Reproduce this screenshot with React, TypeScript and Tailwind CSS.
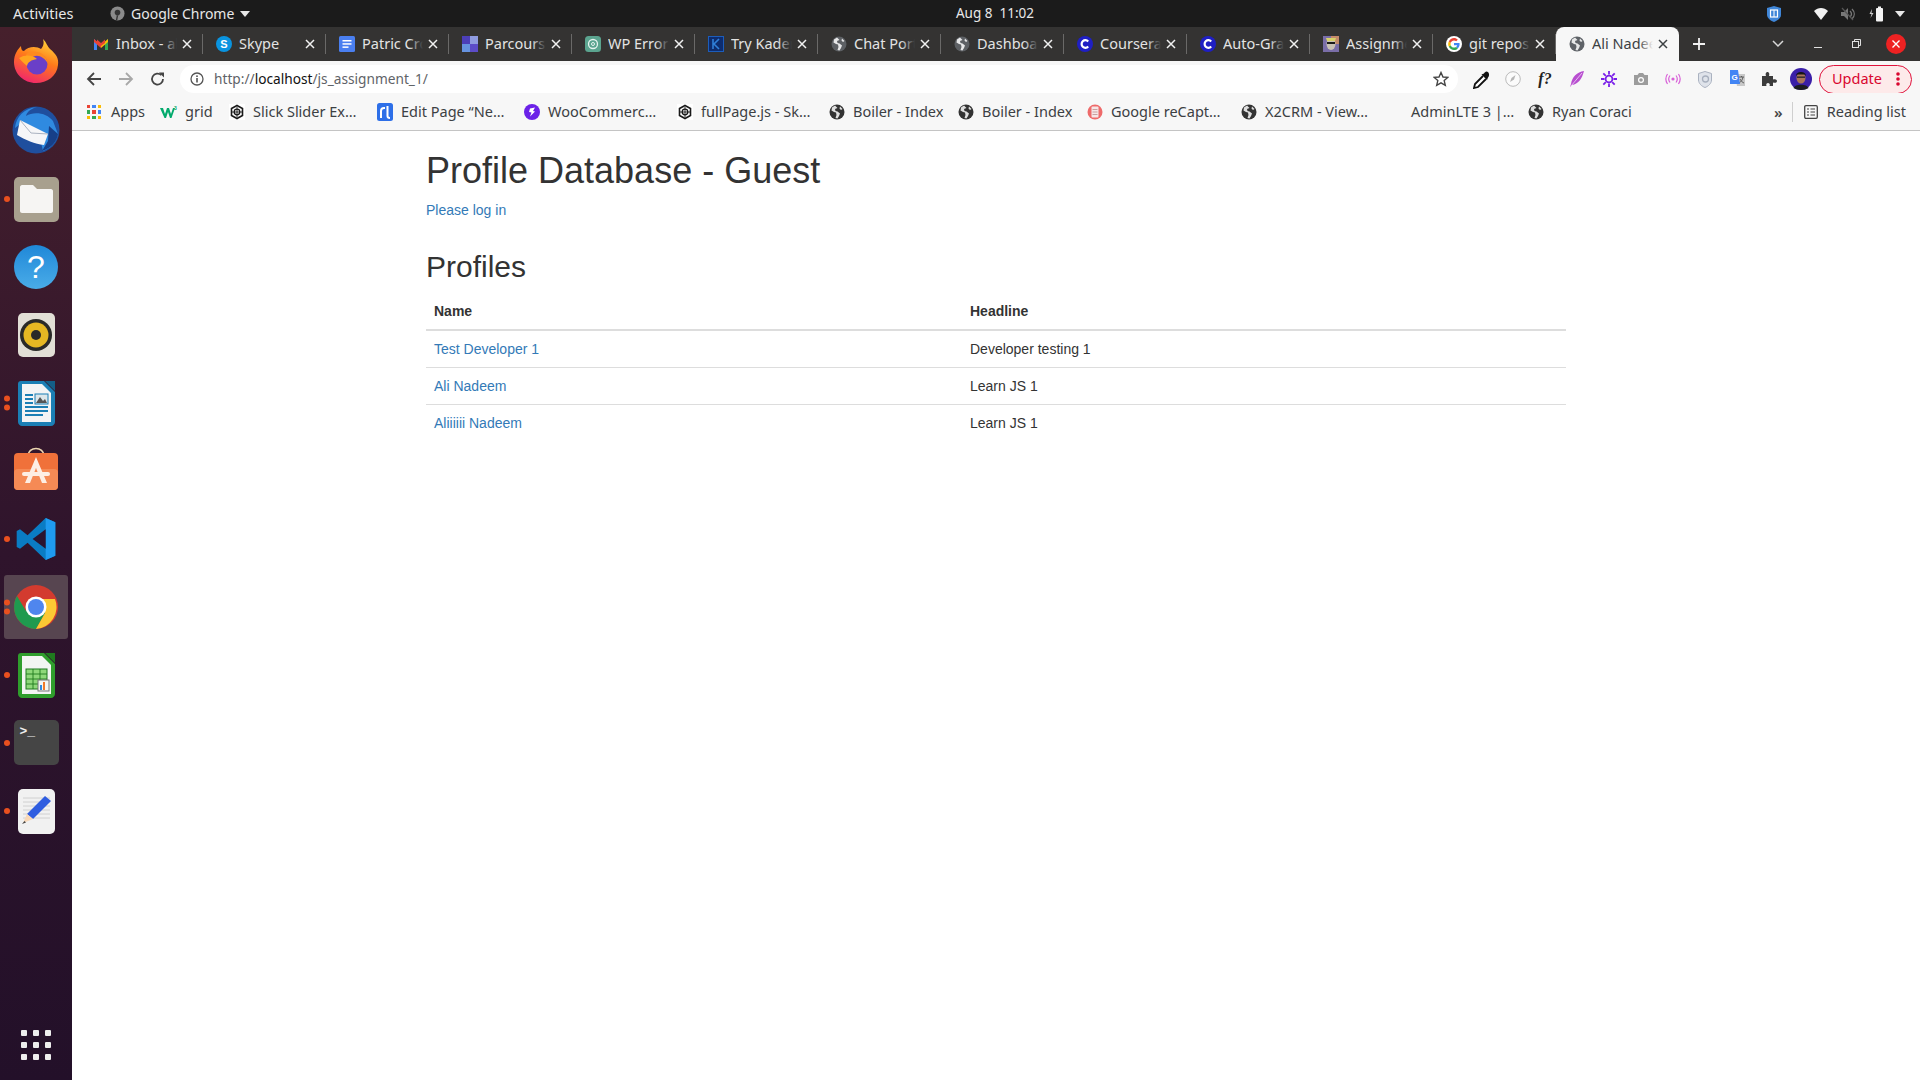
import { ReactNode } from "react";

const UI_FONT = "font-['Noto_Sans',sans-serif]";

const Globe = ({ color = "#5f6368", size = 16 }: { color?: string; size?: number }) => (
  <svg width={size} height={size} viewBox="0 0 16 16" className="shrink-0">
    <circle cx="8" cy="8" r="7.5" fill={color} />
    <path d="M6 1.5 L3 3.5 L2.5 6.5 L5 8 L7 8.5 L7.5 11 L6.5 14 L8.5 14.5 L10 12 L11 9.5 L8.5 7.5 L6.5 7 L6 5 L8.5 4 Z" fill="#fff" opacity="0.85" />
    <path d="M11 2.5 L13.5 5 L12 6 L10.5 4.5 Z" fill="#fff" opacity="0.85" />
  </svg>
);

const Gmail = () => (
  <svg width="16" height="16" viewBox="0 0 16 16" className="shrink-0">
    <path d="M1 3 L1 14 L4 14 L4 6 Z" fill="#4285f4" />
    <path d="M15 3 L15 14 L12 14 L12 6 Z" fill="#34a853" />
    <path d="M1 3 L8 9 L8 12 L1 6 Z" fill="#ea4335" />
    <path d="M15 3 L8 9 L8 12 L15 6 Z" fill="#fbbc04" />
    <path d="M4 3.5 L8 7 L12 3.5 L12 7 L8 10 L4 7 Z" fill="#ea4335" />
  </svg>
);

const Skype = () => (
  <svg width="16" height="16" viewBox="0 0 16 16" className="shrink-0">
    <circle cx="8" cy="8" r="8" fill="#0a94e0" />
    <text x="8" y="12" textAnchor="middle" fontSize="11" fontWeight="700" fill="#fff" fontFamily="Liberation Sans">S</text>
  </svg>
);

const Docs = () => (
  <svg width="16" height="16" viewBox="0 0 16 16" className="shrink-0">
    <rect width="16" height="16" rx="1.5" fill="#4a7ff0" />
    <rect x="3.5" y="4" width="9" height="1.5" fill="#fff" />
    <rect x="3.5" y="7.2" width="9" height="1.5" fill="#fff" />
    <rect x="3.5" y="10.4" width="6" height="1.5" fill="#fff" />
  </svg>
);

const Parcours = () => (
  <svg width="16" height="16" viewBox="0 0 16 16" className="shrink-0">
    <rect width="8" height="8" fill="#4c3fb8" />
    <rect x="8" width="8" height="8" fill="#8f9be0" />
    <rect y="8" width="8" height="8" fill="#6693e0" />
    <rect x="8" y="8" width="8" height="8" fill="#5c4cc8" />
  </svg>
);

const OpenAi = () => (
  <svg width="16" height="16" viewBox="0 0 16 16" className="shrink-0">
    <rect width="16" height="16" rx="3.5" fill="#5ba48f" />
    <circle cx="8" cy="8" r="4.5" fill="none" stroke="#e6f3ef" strokeWidth="1.3" />
    <circle cx="8" cy="8" r="1.5" fill="none" stroke="#e6f3ef" strokeWidth="1" />
  </svg>
);

const Kadence = () => (
  <svg width="16" height="16" viewBox="0 0 16 16" className="shrink-0">
    <rect x="0.5" y="0.5" width="15" height="15" fill="#0d2c6e" stroke="#1c5dbb" />
    <path d="M5 3 L5 13 M11 3 L6 8 L11 13" stroke="#2f7fd8" strokeWidth="1.6" fill="none" />
  </svg>
);

const Coursera = () => (
  <svg width="16" height="16" viewBox="0 0 16 16" className="shrink-0">
    <circle cx="8" cy="8" r="8" fill="#1f1fc4" />
    <path d="M11.2 5.4 A3.8 3.8 0 1 0 11.2 10.6" fill="none" stroke="#fff" strokeWidth="2.2" />
  </svg>
);

const Avatar = () => (
  <svg width="16" height="16" viewBox="0 0 16 16" className="shrink-0">
    <rect width="16" height="16" fill="#7a6ea8" />
    <rect x="8" width="8" height="8" fill="#c48a6a" />
    <ellipse cx="8" cy="8" rx="4.5" ry="6" fill="#c9c2b4" />
    <rect x="4" y="6" width="8" height="2" fill="#1a1a1a" />
    <path d="M3 2 L13 2 L12 5 L4 5 Z" fill="#d6d26a" />
  </svg>
);

const GoogleG = () => (
  <svg width="16" height="16" viewBox="0 0 16 16" className="shrink-0">
    <circle cx="8" cy="8" r="8" fill="#fff" />
    <path d="M13.6 8.2 C13.6 7.8 13.5 7.4 13.5 7 L8 7 L8 9.3 L11.2 9.3 C11 10 10.6 10.6 10 11 L11.8 12.4 C12.9 11.4 13.6 9.9 13.6 8.2 Z" fill="#4285f4" />
    <path d="M8 14 C9.6 14 10.9 13.5 11.8 12.4 L10 11 C9.5 11.4 8.8 11.6 8 11.6 C6.4 11.6 5.2 10.6 4.7 9.2 L2.8 10.6 C3.8 12.6 5.7 14 8 14 Z" fill="#34a853" />
    <path d="M4.7 9.2 C4.5 8.5 4.5 7.5 4.7 6.8 L2.8 5.4 C2 6.9 2 9.1 2.8 10.6 Z" fill="#fbbc04" />
    <path d="M8 4.4 C8.9 4.4 9.6 4.7 10.2 5.3 L11.8 3.7 C10.8 2.7 9.5 2 8 2 C5.7 2 3.8 3.4 2.8 5.4 L4.7 6.8 C5.2 5.4 6.4 4.4 8 4.4 Z" fill="#ea4335" />
  </svg>
);

const tabs: { title: string; icon: ReactNode }[] = [
  { title: "Inbox - ali", icon: <Gmail /> },
  { title: "Skype", icon: <Skype /> },
  { title: "Patric Crowley", icon: <Docs /> },
  { title: "Parcours Lorem", icon: <Parcours /> },
  { title: "WP Error Fix", icon: <OpenAi /> },
  { title: "Try Kadence", icon: <Kadence /> },
  { title: "Chat Portal", icon: <Globe color="#5d6064" /> },
  { title: "Dashboard", icon: <Globe color="#5d6064" /> },
  { title: "Coursera Hub", icon: <Coursera /> },
  { title: "Auto-Grader", icon: <Coursera /> },
  { title: "Assignment", icon: <Avatar /> },
  { title: "git repos list", icon: <GoogleG /> },
];

function Tab({ title, icon }: { title: string; icon: ReactNode }) {
  return (
    <div className="relative flex h-[34px] w-[123px] shrink-0 items-center pb-px pl-[13px]">
      {icon}
      <div className="relative ml-[7px] w-[61px] overflow-hidden whitespace-nowrap text-[14.5px] text-[#e3e3e3]">
        {title}
        <div className="absolute inset-y-0 right-0 w-[14px] bg-gradient-to-r from-transparent to-[#343332]" />
      </div>
      <svg width="10" height="10" viewBox="0 0 10 10" className="ml-[5px] shrink-0">
        <path d="M1 1 L9 9 M9 1 L1 9" stroke="#f1f1f1" strokeWidth="1.5" />
      </svg>
      <div className="absolute right-0 top-[7px] h-[20px] w-px bg-[#6a6968]" />
    </div>
  );
}

function ActiveTab() {
  return (
    <div className="flex h-[34px] w-[123px] shrink-0 items-center rounded-t-[8px] bg-[#f7f7f7] pb-px pl-[13px]">
      <Globe />
      <div className="relative ml-[7px] w-[61px] overflow-hidden whitespace-nowrap text-[14.5px] text-[#3c4043]">
        Ali Nadeem
        <div className="absolute inset-y-0 right-0 w-[14px] bg-gradient-to-r from-transparent to-[#f7f7f7]" />
      </div>
      <svg width="10" height="10" viewBox="0 0 10 10" className="ml-[5px] shrink-0">
        <path d="M1 1 L9 9 M9 1 L1 9" stroke="#3c4043" strokeWidth="1.5" />
      </svg>
    </div>
  );
}

function TopBar() {
  return (
    <div className={`flex h-[27px] items-center bg-[#1b1b1b] text-[14px] text-[#e8e8e8] ${UI_FONT}`}>
      <div className="flex w-[955px] shrink-0 items-center">
        <span className="ml-[13px] w-[97px] text-[14.5px]">Activities</span>
        <svg width="15" height="15" viewBox="0 0 16 16">
          <circle cx="8" cy="8" r="7.5" fill="#8a8a8a" />
          <circle cx="8" cy="7" r="3" fill="#333" />
          <path d="M8 10 L7 15" stroke="#333" strokeWidth="1.5" />
        </svg>
        <span className="ml-[6px]">Google Chrome</span>
        <svg width="10" height="6" viewBox="0 0 10 6" className="ml-[6px]">
          <path d="M0 0 L10 0 L5 6 Z" fill="#e8e8e8" />
        </svg>
      </div>
      <span className="w-[80px] whitespace-pre text-center text-[13.5px]">Aug 8  11:02</span>
      <div className="ml-auto flex items-center">
        <svg width="14" height="16" viewBox="0 0 14 16" className="mr-[33px]">
          <path d="M7 0 L14 2 L14 9 C14 12 10 15 7 16 C4 15 0 12 0 9 L0 2 Z" fill="#3f86d8" />
          <rect x="3.5" y="4" width="7" height="7" fill="none" stroke="#fff" strokeWidth="1.2" />
          <path d="M7 4 L7 11" stroke="#fff" />
        </svg>
        <svg width="14" height="12" viewBox="0 0 14 12" className="mr-[13px]">
          <path d="M0 3 C4 -1 10 -1 14 3 L7 12 Z" fill="#f1f1f1" />
        </svg>
        <svg width="15" height="14" viewBox="0 0 15 14" className="mr-[13px]">
          <path d="M0 5 L3 5 L7 1 L7 13 L3 9 L0 9 Z" fill="#777" />
          <path d="M9 4 C11 6 11 8 9 10 M11 2 C14 5 14 9 11 12" stroke="#777" strokeWidth="1.3" fill="none" />
          <path d="M1 1 L12 13" stroke="#555" strokeWidth="1.2" />
        </svg>
        <svg width="15" height="16" viewBox="0 0 15 16" className="mr-[11px]">
          <path d="M3 3 L0.5 8 L2.5 8 L1.5 12 L4.5 7 L2.5 7 Z" fill="#ccc" />
          <rect x="7" y="2" width="7" height="13.5" rx="1" fill="#f4f4f4" />
          <rect x="9" y="0.5" width="3" height="2" fill="#f4f4f4" />
        </svg>
        <svg width="10" height="6" viewBox="0 0 10 6" className="mr-[15px]">
          <path d="M0 0 L10 0 L5 6 Z" fill="#e8e8e8" />
        </svg>
      </div>
    </div>
  );
}

function TabStrip() {
  return (
    <div className={`flex h-[34px] items-center bg-[#343332] pl-[8px] ${UI_FONT}`}>
      {tabs.map((t) => (
        <Tab key={t.title} title={t.title} icon={t.icon} />
      ))}
      <ActiveTab />
      <svg width="14" height="14" viewBox="0 0 14 14" className="mb-px ml-[13px] shrink-0">
        <path d="M7 1 L7 13 M1 7 L13 7" stroke="#f1f1f1" strokeWidth="1.8" />
      </svg>
      <svg width="12" height="8" viewBox="0 0 12 8" className="mb-px ml-[66px] shrink-0">
        <path d="M1 1 L6 6 L11 1" stroke="#d8d8d8" strokeWidth="1.5" fill="none" />
      </svg>
      <div className="ml-[30px] mt-[6px] h-px w-[8px] shrink-0 bg-[#e0e0e0]" />
      <svg width="9" height="9" viewBox="0 0 9 9" className="mb-px ml-[30px] shrink-0">
        <rect x="0.5" y="2.5" width="6" height="6" fill="none" stroke="#e0e0e0" />
        <path d="M2.5 2.5 L2.5 0.5 L8.5 0.5 L8.5 6.5 L6.5 6.5" fill="none" stroke="#e0e0e0" />
      </svg>
      <div className="mb-px ml-[25px] flex h-[20px] w-[20px] shrink-0 items-center justify-center rounded-full bg-[#ee2222]">
        <svg width="8" height="8" viewBox="0 0 8 8">
          <path d="M0.5 0.5 L7.5 7.5 M7.5 0.5 L0.5 7.5" stroke="#fff" strokeWidth="1.4" />
        </svg>
      </div>
    </div>
  );
}

const extensions: ReactNode[] = [
  <svg key="drop" width="17" height="19" viewBox="0 0 17 19">
    <path d="M10 6 L2 14 L1 18 L5 17 L13 9" fill="#fff" stroke="#111" strokeWidth="1.8" />
    <path d="M8.5 4.5 L14 10 L15 7.5 C17 5.5 16 1.5 13.5 1.5 C12.5 1.5 11.5 2.5 11 3.5 Z" fill="#111" />
  </svg>,
  <svg key="compass" width="16" height="16" viewBox="0 0 16 16">
    <circle cx="8" cy="8" r="7.3" fill="#fbfbfb" stroke="#bbb" />
    <path d="M5 11 L6.5 7 L10.5 4 L9 8.5 Z" fill="#b5b5b5" />
  </svg>,
  <span key="f" className="font-['Liberation_Serif',serif] text-[16px] font-bold italic leading-none text-[#222]">f?</span>,
  <svg key="feather" width="16" height="18" viewBox="0 0 16 18">
    <path d="M15 1 C8 2 3 7 2 14 L1 17 L3 15 C9 14 13 9 15 1 Z" fill="#b84fd0" />
    <path d="M13 3 L2 16" stroke="#f3d8f8" strokeWidth="0.8" />
  </svg>,
  <svg key="sun" width="16" height="16" viewBox="0 0 16 16">
    <circle cx="8" cy="8" r="3.4" fill="none" stroke="#7a1fe8" strokeWidth="1.8" />
    <path d="M8 0 V3.5 M8 12.5 V16 M0 8 H3.5 M12.5 8 H16 M2.3 2.3 L4.8 4.8 M11.2 11.2 L13.7 13.7 M13.7 2.3 L11.2 4.8 M4.8 11.2 L2.3 13.7" stroke="#7a1fe8" strokeWidth="1.8" />
  </svg>,
  <svg key="camera" width="16" height="14" viewBox="0 0 16 14">
    <path d="M1 3 H4.5 L6 1 H10 L11.5 3 H15 V13 H1 Z" fill="#9c9c9c" />
    <circle cx="8" cy="8" r="3" fill="#fff" />
    <circle cx="8" cy="8" r="1.8" fill="#9c9c9c" />
  </svg>,
  <svg key="radio" width="16" height="12" viewBox="0 0 16 12">
    <circle cx="8" cy="6" r="1.6" fill="#d860d8" />
    <path d="M5 2.5 C3.5 4.5 3.5 7.5 5 9.5 M11 2.5 C12.5 4.5 12.5 7.5 11 9.5 M2.5 1 C0.5 4 0.5 8 2.5 11 M13.5 1 C15.5 4 15.5 8 13.5 11" stroke="#d860d8" strokeWidth="1.2" fill="none" />
  </svg>,
  <svg key="shield" width="14" height="17" viewBox="0 0 14 17">
    <path d="M7 0.5 L13.5 2.5 L13.5 9 C13.5 12.5 10 15.5 7 16.5 C4 15.5 0.5 12.5 0.5 9 L0.5 2.5 Z" fill="#dfe3ea" stroke="#aab2c0" />
    <circle cx="7.5" cy="8" r="3" fill="none" stroke="#a8b0be" strokeWidth="1.3" />
  </svg>,
  <svg key="translate" width="17" height="18" viewBox="0 0 17 18">
    <path d="M6 4 H16 V16 H8 Z" fill="#c9c9c9" />
    <path d="M10 7 H15 M12.5 6 V7 M14 7 C13.5 10 12 12 10 13 M11 9 C12 11 13.5 12.5 15 13" stroke="#555" strokeWidth="0.9" fill="none" />
    <path d="M1 0 H9 L11 14 H1 Z" fill="#4285f4" />
    <text x="5.5" y="10" textAnchor="middle" fontSize="8" fontWeight="700" fill="#fff" fontFamily="Liberation Sans">G</text>
  </svg>,
  <svg key="puzzle" width="16" height="16" viewBox="0 0 16 16">
    <path d="M1 5 H5 C4 2 5.5 1 6.5 1 C7.5 1 9 2 8 5 H12 V8.5 C15 7.5 16 9 16 10 C16 11 15 12.5 12 11.5 V15 H8.5 C9.5 13 8 12 7 12 C6 12 4.5 13 5.5 15 H1 Z" fill="#3c3c3c" />
  </svg>,
  <svg key="avatar" width="22" height="22" viewBox="0 0 22 22">
    <circle cx="11" cy="11" r="11" fill="#3a1fa8" />
    <ellipse cx="11" cy="10" rx="4.5" ry="5.5" fill="#a8745a" />
    <path d="M6 8 C6 2.5 16 2.5 16 8 L14.5 6.5 L7.5 6.5 Z" fill="#161616" />
    <rect x="7" y="8.5" width="8" height="1.3" fill="#222" />
    <path d="M3.5 20 C5 15.5 17 15.5 18.5 20 C15 22.5 7 22.5 3.5 20 Z" fill="#1c1c22" />
  </svg>,
];

function Toolbar() {
  return (
    <div className={`flex h-[32px] items-center bg-[#f7f7f7] pt-[4px] ${UI_FONT}`}>
      <svg width="16" height="16" viewBox="0 0 16 16" className="ml-[14px] shrink-0">
        <path d="M15 8 H2 M8 2 L2 8 L8 14" stroke="#444" strokeWidth="1.8" fill="none" />
      </svg>
      <svg width="16" height="16" viewBox="0 0 16 16" className="ml-[16px] shrink-0">
        <path d="M1 8 H14 M8 2 L14 8 L8 14" stroke="#a8a8a8" strokeWidth="1.8" fill="none" />
      </svg>
      <svg width="16" height="16" viewBox="0 0 16 16" className="ml-[16px] shrink-0">
        <path d="M13 8 A5.5 5.5 0 1 1 11.4 4.2" stroke="#444" strokeWidth="1.8" fill="none" />
        <path d="M10 1 L15 1 L15 6 Z" fill="#444" transform="translate(-1 0.5)" />
      </svg>
      <div className="ml-[14px] flex h-[28px] w-[1278px] shrink-0 items-center rounded-full bg-white pl-[10px]">
        <svg width="14" height="14" viewBox="0 0 14 14" className="shrink-0">
          <circle cx="7" cy="7" r="6" fill="none" stroke="#555" strokeWidth="1.3" />
          <rect x="6.2" y="6" width="1.6" height="4.5" fill="#555" />
          <rect x="6.2" y="3.4" width="1.6" height="1.6" fill="#555" />
        </svg>
        <div className="ml-[10px] whitespace-nowrap text-[13.7px] text-[#5f6368]">
          http://<span className="text-[#111]">localhost</span>/js_assignment_1/
        </div>
        <svg width="16" height="16" viewBox="0 0 16 16" className="ml-auto mr-[9px] shrink-0">
          <path d="M8 1.5 L10 6 L14.8 6.4 L11.2 9.6 L12.3 14.3 L8 11.8 L3.7 14.3 L4.8 9.6 L1.2 6.4 L6 6 Z" fill="none" stroke="#444" strokeWidth="1.4" />
        </svg>
      </div>
      <div className="ml-[7px] flex shrink-0 items-center">
        {extensions.map((icon, i) => (
          <div key={i} className="flex w-[32px] items-center justify-center">
            {icon}
          </div>
        ))}
      </div>
      <div className="ml-[2px] flex h-[29px] w-[93px] shrink-0 items-center rounded-full border border-[#e0123c] bg-[#fdeaea] pl-[12px] text-[14.5px] text-[#d9062f]">
        Update
        <svg width="4" height="14" viewBox="0 0 4 14" className="ml-[14px]">
          <circle cx="2" cy="2" r="1.8" fill="#d9062f" />
          <circle cx="2" cy="7" r="1.8" fill="#d9062f" />
          <circle cx="2" cy="12" r="1.8" fill="#d9062f" />
        </svg>
      </div>
    </div>
  );
}

const AppsGrid = () => {
  const colors = ["#ea4335", "#4285f4", "#fbbc04", "#34a853", "#ea4335", "#4285f4", "#fbbc04", "#34a853", "#fbbc04"];
  return (
    <div className="grid h-[14px] w-[14px] shrink-0 grid-cols-3 gap-[2px]">
      {colors.map((c, i) => (
        <div key={i} style={{ background: c }} />
      ))}
    </div>
  );
};

const W3 = () => (
  <svg width="18" height="14" viewBox="0 0 18 14" className="shrink-0">
    <path d="M0 3 H3 L5 9 L7 3 H9 L11 9 L13 3 H15 L11.5 13 H10 L8 7 L6 13 H4.5 Z" fill="#04aa6d" />
    <text x="14" y="4.5" fontSize="5" fontWeight="700" fill="#04aa6d" fontFamily="Liberation Sans">3</text>
  </svg>
);

const Slick = () => (
  <svg width="16" height="16" viewBox="0 0 16 16" className="shrink-0">
    <rect width="16" height="16" fill="#fff" />
    <path d="M8 1.5 L13.5 4.5 L13.5 11.5 L8 14.5 L2.5 11.5 L2.5 4.5 Z" fill="none" stroke="#1a1a1a" strokeWidth="1.6" />
    <circle cx="8" cy="8" r="2.8" fill="none" stroke="#1a1a1a" strokeWidth="1.3" />
    <path d="M8 3 V13 M3 8 H13" stroke="#1a1a1a" strokeWidth="0.9" />
  </svg>
);

const EditPage = () => (
  <svg width="16" height="18" viewBox="0 0 16 18" className="shrink-0">
    <rect width="16" height="18" rx="2.5" fill="#2d6fe8" />
    <path d="M4 15 V8 C4 6 5 5 7 5 H8 M10.5 3 V13 C10.5 14.5 11.5 15 13 15" stroke="#fff" strokeWidth="2" fill="none" />
  </svg>
);

const Woo = () => (
  <svg width="16" height="16" viewBox="0 0 16 16" className="shrink-0">
    <circle cx="8" cy="8" r="8" fill="#6b21e8" />
    <path d="M6 4.5 L11 3.5 L9 7 L11 7.5 L6 12.5 L7.5 8.5 L5 8 Z" fill="#fff" />
  </svg>
);

const Recaptcha = () => (
  <svg width="16" height="16" viewBox="0 0 16 16" className="shrink-0">
    <circle cx="8" cy="8" r="7.5" fill="#ee6a6a" />
    <rect x="4.5" y="2.5" width="7" height="11" rx="1" fill="#f6e6e6" />
    <path d="M5.5 5.5 H10.5 M5.5 8 H10.5 M5.5 10.5 H10.5" stroke="#c9a0a0" />
  </svg>
);

const bookmarks: { label: string; icon: ReactNode; width: string; gap: string }[] = [
  { label: "Apps", icon: <AppsGrid />, width: "w-[73px]", gap: "gap-[10px]" },
  { label: "grid", icon: <W3 />, width: "w-[69px]", gap: "gap-[7px]" },
  { label: "Slick Slider Ex…", icon: <Slick />, width: "w-[148px]", gap: "gap-[8px]" },
  { label: "Edit Page “Ne…", icon: <EditPage />, width: "w-[147px]", gap: "gap-[8px]" },
  { label: "WooCommerc…", icon: <Woo />, width: "w-[153px]", gap: "gap-[8px]" },
  { label: "fullPage.js - Sk…", icon: <Slick />, width: "w-[152px]", gap: "gap-[8px]" },
  { label: "Boiler - Index", icon: <Globe color="#333" />, width: "w-[129px]", gap: "gap-[8px]" },
  { label: "Boiler - Index", icon: <Globe color="#333" />, width: "w-[129px]", gap: "gap-[8px]" },
  { label: "Google reCapt…", icon: <Recaptcha />, width: "w-[154px]", gap: "gap-[8px]" },
  { label: "X2CRM - View…", icon: <Globe color="#333" />, width: "w-[146px]", gap: "gap-[8px]" },
  { label: "AdminLTE 3 |…", icon: <div className="h-[16px] w-[16px] shrink-0" />, width: "w-[141px]", gap: "gap-[8px]" },
  { label: "Ryan Coraci", icon: <Globe color="#333" />, width: "w-[120px]", gap: "gap-[8px]" },
];

function BookmarksBar() {
  return (
    <div className={`flex h-[38px] items-center border-b border-[#c4c4c4] bg-[#f7f7f7] pl-[15px] pt-px text-[14.5px] text-[#3c4043] ${UI_FONT}`}>
      {bookmarks.map((b, i) => (
        <div key={i} className={`flex shrink-0 items-center whitespace-nowrap ${b.gap} ${b.width}`}>
          {b.icon}
          <span>{b.label}</span>
        </div>
      ))}
      <span className="ml-auto text-[15px] font-semibold text-[#444]">»</span>
      <div className="ml-[9px] h-[20px] w-px bg-[#cfcfcf]" />
      <svg width="14" height="14" viewBox="0 0 14 14" className="ml-[11px] shrink-0">
        <rect x="0.7" y="0.7" width="12.6" height="12.6" rx="1.2" fill="none" stroke="#444" strokeWidth="1.3" />
        <path d="M3 4 H5 M3 7 H5 M3 10 H5 M6.5 4 H11 M6.5 7 H11 M6.5 10 H11" stroke="#444" strokeWidth="1.2" />
      </svg>
      <span className="ml-[9px] mr-[14px]">Reading list</span>
    </div>
  );
}

function ProfilePage() {
  const rows = [
    { name: "Test Developer 1", headline: "Developer testing 1" },
    { name: "Ali Nadeem", headline: "Learn JS 1" },
    { name: "Aliiiiii Nadeem", headline: "Learn JS 1" },
  ];
  return (
    <div className="flex-1 bg-white font-['Liberation_Sans',sans-serif] text-[14px] leading-[20px] text-[#333]">
      <div className="mx-auto w-[1170px] px-[15px]">
        <h1 className="mt-[20px] mb-[9px] text-[36px] font-medium leading-[40px]">Profile Database - Guest</h1>
        <p className="mb-[10px]">
          <a className="text-[#337ab7]">Please log in</a>
        </p>
        <h2 className="mt-[30px] mb-[10px] text-[30px] font-medium leading-[33px]">Profiles</h2>
        <table className="w-full border-collapse">
          <thead>
            <tr>
              <th className="w-[536px] border-b-2 border-[#ddd] p-[8px] text-left font-bold">Name</th>
              <th className="border-b-2 border-[#ddd] p-[8px] text-left font-bold">Headline</th>
            </tr>
          </thead>
          <tbody>
            {rows.map((r, i) => (
              <tr key={r.name} className={i > 0 ? "border-t border-[#ddd]" : ""}>
                <td className="p-[8px]">
                  <a className="text-[#337ab7]">{r.name}</a>
                </td>
                <td className="p-[8px]">{r.headline}</td>
              </tr>
            ))}
          </tbody>
        </table>
      </div>
    </div>
  );
}

const dockIcons: { dots: number; active?: boolean; icon: ReactNode }[] = [
  {
    dots: 0,
    icon: (
      <svg width="46" height="46" viewBox="0 0 46 46" className="-mt-[4px]">
        <defs>
          <linearGradient id="ff" x1="0.7" y1="0" x2="0.3" y2="1">
            <stop offset="0" stopColor="#ffd43a" />
            <stop offset="0.45" stopColor="#ff7a1a" />
            <stop offset="1" stopColor="#f0246e" />
          </linearGradient>
        </defs>
        <path d="M30 1 C34 5 34 8 37 11 C43 16 46 20 45 27 C44 38 34 45 23 45 C11 45 1 36 1 24 C1 16 5 11 8 8 C8 11 9 13 11 13 C15 8 24 8 28 11 C31 8 31 4 30 1 Z" fill="url(#ff)" />
        <circle cx="24" cy="26" r="10.5" fill="#6a3fc8" />
        <path d="M14 21 C10 16 17 12 24 14 C31 15 34 20 35 26 C31 18 22 15 18 21 Z" fill="#ff8a1f" />
        <path d="M6 20 C12 16 20 17 24 21 C18 22 15 24 14 28 C11 25 8 23 6 20 Z" fill="#ffa51f" />
      </svg>
    ),
  },
  {
    dots: 0,
    icon: (
      <svg width="50" height="50" viewBox="0 0 50 50" className="-mt-[4px]">
        <circle cx="25" cy="26" r="23.5" fill="#1f4f9e" />
        <path d="M4 24 C5 13 13 4 26 3 C19 5 16 8 15 12 C23 7 36 9 42 17 L47 30 C46 38 40 44 32 47 L28 30 L12 18 Z" fill="#2f8ae0" />
        <path d="M9 16 L37 30 L33 41 C24 40 14 36 6 31 Z" fill="#f6f6f8" />
        <path d="M9 16 L20 29 L37 30" fill="none" stroke="#aab2c0" />
        <path d="M38 22 L47 30 C46 38 40 44 31 47 L37 37 Z" fill="#173f88" />
      </svg>
    ),
  },
  {
    dots: 1,
    icon: (
      <div className="flex h-[45px] w-[45px] items-center justify-center rounded-[5px] bg-[#a8a08e]">
        <svg width="33" height="28" viewBox="0 0 33 28">
          <path d="M2 0 H13 L17 4 H31 C32 4 33 5 33 6 V26 C33 27 32 28 31 28 H2 C1 28 0 27 0 26 V2 C0 1 1 0 2 0 Z" fill="#f6f5f3" />
        </svg>
      </div>
    ),
  },
  {
    dots: 0,
    icon: (
      <div className="flex h-[44px] w-[44px] items-center justify-center rounded-full bg-gradient-to-b from-[#1e88d8] to-[#49ace8] font-['Liberation_Sans',sans-serif] text-[32px] leading-none text-white">
        ?
      </div>
    ),
  },
  {
    dots: 0,
    icon: (
      <div className="flex h-[44px] w-[37px] items-center justify-center rounded-[5px] bg-[#e2dfd6]">
        <svg width="34" height="34" viewBox="0 0 34 34">
          <circle cx="17" cy="17" r="16" fill="#2a2a28" />
          <circle cx="17" cy="17" r="12.5" fill="#e6b823" />
          <circle cx="17" cy="17" r="5" fill="#2a2a28" />
        </svg>
      </div>
    ),
  },
  {
    dots: 2,
    icon: (
      <svg width="37" height="45" viewBox="0 0 37 45">
        <path d="M3 0 H26 L37 11 V41 C37 43 35 45 33 45 H4 C2 45 0 43 0 41 V3 C0 1 1 0 3 0 Z" fill="#1b7fb5" />
        <path d="M4 3 H24 L33 12 V40 C33 41 33 41 32 41 H5 C4 41 4 41 4 40 Z" fill="#f3f4f5" />
        <path d="M27 0 L37 0 L37 10 Z" fill="#135f88" />
        <rect x="7" y="13" width="8" height="2" fill="#1b7fb5" />
        <rect x="7" y="17" width="8" height="2" fill="#1b7fb5" />
        <rect x="7" y="21" width="8" height="2" fill="#1b7fb5" />
        <rect x="17" y="13" width="13" height="10" fill="#dce6ea" stroke="#1b7fb5" />
        <path d="M18 22 L22 16 L25 20 L27 18 L29 22 Z" fill="#555" />
        <rect x="7" y="25" width="23" height="2" fill="#1b7fb5" />
        <rect x="7" y="29" width="23" height="2" fill="#1b7fb5" />
        <rect x="7" y="33" width="18" height="2" fill="#1b7fb5" />
      </svg>
    ),
  },
  {
    dots: 0,
    icon: (
      <svg width="44" height="44" viewBox="0 0 44 44" className="-mt-[4px]">
        <path d="M14 9 C14 -1 30 -1 30 9" fill="none" stroke="#ecd6b0" strokeWidth="1.6" />
        <rect y="6" width="44" height="37" rx="4" fill="#f0713a" />
        <rect y="22" width="44" height="21" rx="4" fill="#f58a55" />
        <path d="M22 10 L33 36 H28 L22 21 L16 36 H11 Z" fill="#fdeee4" />
        <rect x="8" y="25" width="28" height="4" rx="2" fill="#fdeee4" />
      </svg>
    ),
  },
  {
    dots: 1,
    icon: (
      <svg width="42" height="42" viewBox="0 0 100 100">
        <path d="M96 10 L73 0 L30 41 L12 27 L4 31 V69 L12 73 L30 59 L73 100 L96 90 Z" fill="#0a7cc4" />
        <path d="M73 0 L96 10 V90 L73 100 Z" fill="#1f9bf0" />
        <path d="M73 27 L42 50 L73 73 Z" fill="#2b1430" />
      </svg>
    ),
  },
  {
    dots: 2,
    active: true,
    icon: (
      <svg width="44" height="44" viewBox="0 0 44 44">
        <circle cx="22" cy="22" r="22" fill="#d33b2f" />
        <path d="M3 11 A22 22 0 0 0 22 44 L33 25 L22 14 L12 26 Z" fill="#1f9a4f" />
        <path d="M22 14 H41 A22 22 0 0 1 22 44 L31 28 Z" fill="#fcc934" />
        <circle cx="22" cy="22" r="10.5" fill="#fff" />
        <circle cx="22" cy="22" r="8" fill="#4f86ee" />
      </svg>
    ),
  },
  {
    dots: 1,
    icon: (
      <svg width="37" height="45" viewBox="0 0 37 45">
        <path d="M3 0 H26 L37 11 V41 C37 43 35 45 33 45 H4 C2 45 0 43 0 41 V3 C0 1 1 0 3 0 Z" fill="#2f9e2c" />
        <path d="M4 3 H24 L33 12 V40 C33 41 33 41 32 41 H5 C4 41 4 41 4 40 Z" fill="#f3f5f2" />
        <path d="M27 0 L37 0 L37 10 Z" fill="#1f7a1e" />
        <rect x="8" y="16" width="21" height="20" fill="#8fd87a" stroke="#1f7a1e" />
        <path d="M8 21 H29 M8 26 H29 M8 31 H29 M15 16 V36 M22 16 V36" stroke="#1f7a1e" strokeWidth="0.9" />
        <rect x="20" y="27" width="11" height="11" fill="#f3f5f2" stroke="#777" />
        <rect x="22" y="32" width="2" height="5" fill="#2f8ae0" />
        <rect x="25" y="29" width="2" height="8" fill="#f07a2a" />
      </svg>
    ),
  },
  {
    dots: 1,
    icon: (
      <div className="-mt-[2px] h-[45px] w-[45px] rounded-[5px] bg-[#454545] pl-[6px] pt-[5px] font-['Liberation_Mono',monospace] text-[13px] font-bold leading-none text-[#eee]">
        &gt;_
      </div>
    ),
  },
  {
    dots: 1,
    icon: (
      <div className="flex h-[45px] w-[37px] items-center justify-center rounded-[5px] bg-[#f1f1f1]">
        <svg width="30" height="32" viewBox="0 0 30 32">
          <path d="M2 3 H29 M2 7 H29 M2 11 H29 M2 15 H29 M2 19 H29 M2 23 H29" stroke="#d0d0d0" />
          <path d="M24 1 L30 6 L12 24 L6 19 Z" fill="#2f5de0" />
          <path d="M6 19 L12 24 L2 28 Z" fill="#f8d8b8" />
          <path d="M3.5 26 L5 27.4 L1 29 Z" fill="#444" />
        </svg>
      </div>
    ),
  },
];

function Dock() {
  return (
    <div className="flex h-[1053px] w-[72px] shrink-0 flex-col bg-gradient-to-b from-[#46202c] via-[#2f142c] to-[#231029] pt-[2px]">
      {dockIcons.map((d, i) => (
        <div key={i} className="relative flex h-[68px] items-center justify-center">
          {d.active && <div className="absolute inset-x-[4px] inset-y-[2px] rounded-[3px] bg-[#574550]" />}
          <div className="relative flex items-center justify-center">{d.icon}</div>
          {d.dots > 0 && (
            <div className="absolute left-[4px] top-1/2 flex -translate-y-1/2 flex-col gap-[3px]">
              {Array.from({ length: d.dots }).map((_, j) => (
                <div key={j} className="h-[6px] w-[6px] rounded-full bg-[#e9501f]" />
              ))}
            </div>
          )}
        </div>
      ))}
      <div className="mt-auto mb-[20px] grid w-[30px] grid-cols-3 gap-[6px] self-center">
        {Array.from({ length: 9 }).map((_, i) => (
          <div key={i} className="h-[6px] w-[6px] rounded-[1px] bg-[#eeeeee]" />
        ))}
      </div>
    </div>
  );
}

export default function App() {
  return (
    <div className="flex h-[1080px] w-[1920px] flex-col overflow-hidden">
      <TopBar />
      <div className="flex flex-1">
        <Dock />
        <div className="flex min-w-0 flex-1 flex-col">
          <TabStrip />
          <Toolbar />
          <BookmarksBar />
          <ProfilePage />
        </div>
      </div>
    </div>
  );
}
